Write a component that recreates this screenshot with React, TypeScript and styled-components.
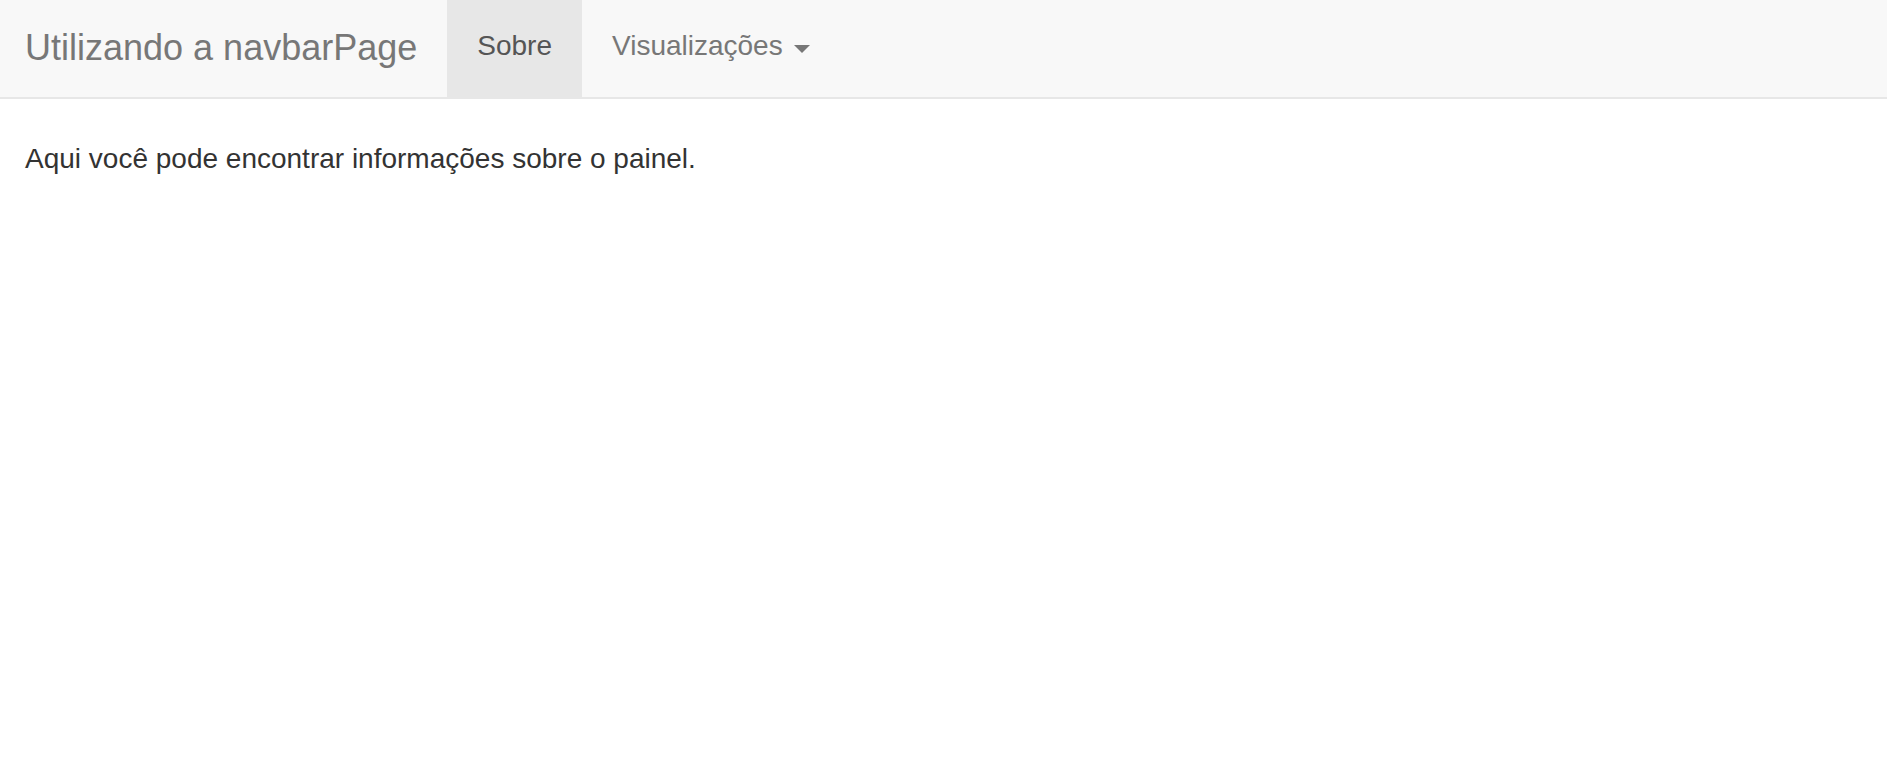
import React from "react";
import styled, { createGlobalStyle } from "styled-components";

const GlobalStyle = createGlobalStyle`
  html, body {
    margin: 0;
    padding: 0;
    background: #ffffff;
  }
  body {
    font-family: "Liberation Sans", Arial, Helvetica, sans-serif;
    font-size: 28px;
    line-height: 40px;
    color: #333333;
  }
  * { box-sizing: border-box; }
`;

const Navbar = styled.nav`
  display: flex;
  align-items: stretch;
  height: 99px;
  background: #f8f8f8;
  border-bottom: 2px solid #e7e7e7;
`;

const Brand = styled.a`
  display: block;
  padding: 27.5px 30px 0 25px;
  font-size: 36px;
  line-height: 40px;
  color: #777777;
  text-decoration: none;
  white-space: nowrap;
`;

const NavList = styled.ul`
  display: flex;
  margin: 0;
  padding: 0;
  list-style: none;
`;

const NavItem = styled.li<{ $active?: boolean }>`
  display: flex;
  align-items: flex-start;
  padding: 26px 30px 0;
  font-size: 28px;
  line-height: 40px;
  color: ${(p) => (p.$active ? "#555555" : "#777777")};
  background: ${(p) => (p.$active ? "#e7e7e7" : "transparent")};
  white-space: pre;
  cursor: pointer;
`;

const Caret = styled.span`
  display: inline-block;
  width: 0;
  height: 0;
  margin-left: 4px;
  margin-top: 19px;
  border-top: 8px solid #777777;
  border-left: 8px solid transparent;
  border-right: 8px solid transparent;
`;

const Content = styled.main`
  padding: 40px 25px 0;
`;

const Paragraph = styled.p`
  margin: 0;
  font-size: 28px;
  line-height: 40px;
  color: #333333;
`;

export default function App() {
  return (
    <>
      <GlobalStyle />
      <Navbar>
        <Brand>Utilizando a navbarPage</Brand>
        <NavList>
          <NavItem $active>Sobre</NavItem>
          <NavItem>
            {"Visualizações "}
            <Caret />
          </NavItem>
        </NavList>
      </Navbar>
      <Content>
        <Paragraph>Aqui você pode encontrar informações sobre o painel.</Paragraph>
      </Content>
    </>
  );
}
